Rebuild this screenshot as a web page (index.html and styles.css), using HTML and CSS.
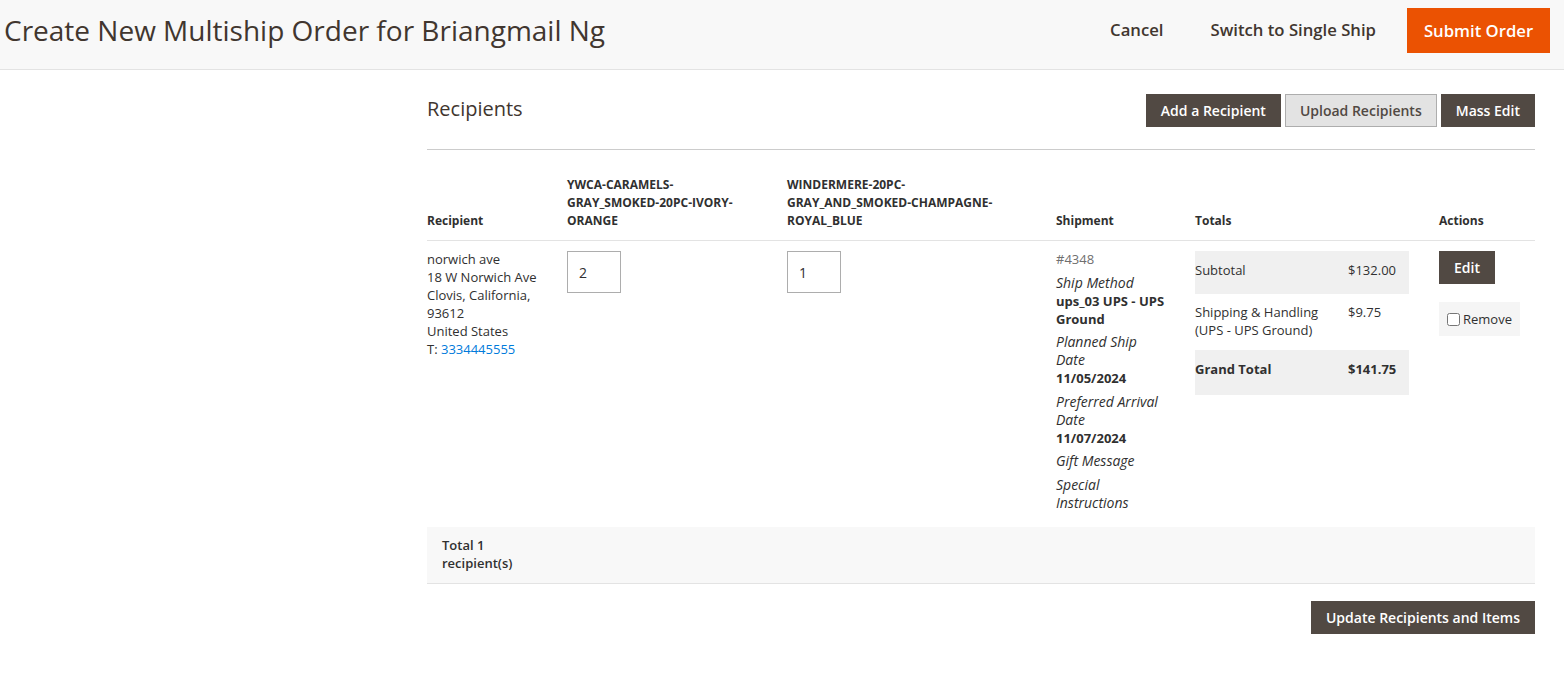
FILE: index.html
```
<!DOCTYPE html>
<html lang="en">
<head>
    <meta charset="UTF-8">
    <title>Create New Multiship Order</title>
    <link rel="stylesheet" href="styles.css">
</head>
<body>
<div class="page-header">
    <h1 class="page-title">Create New Multiship Order for Briangmail Ng</h1>
    <div class="page-actions">
        <button class="action-link">Cancel</button>
        <button class="action-link">Switch to Single Ship</button>
        <button class="action-primary">Submit Order</button>
    </div>
</div>

<div class="page-columns">
    <div class="side-col"></div>
    <div class="main-col">
        <div class="section-head">
            <h2 class="section-title">Recipients</h2>
            <div class="section-actions">
                <button class="btn">Add a Recipient</button>
                <button class="btn btn-light">Upload Recipients</button>
                <button class="btn">Mass Edit</button>
            </div>
        </div>

        <table class="grid">
            <colgroup>
                <col class="c-recipient">
                <col class="c-item1">
                <col class="c-item2">
                <col class="c-ship">
                <col class="c-totals">
                <col class="c-actions">
            </colgroup>
            <thead>
            <tr>
                <th>Recipient</th>
                <th class="th-item1">YWCA-CARAMELS-GRAY_SMOKED-20PC-IVORY-ORANGE</th>
                <th class="th-item2">WINDERMERE-20PC-GRAY_AND_SMOKED-CHAMPAGNE-ROYAL_BLUE</th>
                <th>Shipment</th>
                <th>Totals</th>
                <th>Actions</th>
            </tr>
            </thead>
            <tbody>
            <tr>
                <td>
                    <address class="addr">
                        norwich ave<br>
                        18 W Norwich Ave<br>
                        Clovis, California,<br>
                        93612<br>
                        United States<br>
                        T: <a href="#">3334445555</a>
                    </address>
                </td>
                <td><input class="qty" type="text" value="2"></td>
                <td><input class="qty" type="text" value="1"></td>
                <td>
                    <div class="ship">
                        <div class="ship-id">#4348</div>
                        <dl>
                            <dt>Ship Method</dt>
                            <dd>ups_03 UPS - UPS Ground</dd>
                            <dt>Planned Ship Date</dt>
                            <dd>11/05/2024</dd>
                            <dt>Preferred Arrival Date</dt>
                            <dd>11/07/2024</dd>
                            <dt>Gift Message</dt>
                            <dt>Special Instructions</dt>
                        </dl>
                    </div>
                </td>
                <td>
                    <table class="totals">
                        <tr class="odd">
                            <td>Subtotal</td>
                            <td>$132.00</td>
                        </tr>
                        <tr class="even">
                            <td>Shipping &amp; Handling (UPS - UPS Ground)</td>
                            <td>$9.75</td>
                        </tr>
                        <tr class="odd grand">
                            <td>Grand Total</td>
                            <td>$141.75</td>
                        </tr>
                    </table>
                </td>
                <td>
                    <button class="btn">Edit</button>
                    <label class="remove"><input type="checkbox">Remove</label>
                </td>
            </tr>
            </tbody>
            <tfoot>
            <tr>
                <td>Total 1 recipient(s)</td>
                <td colspan="5"></td>
            </tr>
            </tfoot>
        </table>

        <div class="grid-actions">
            <button class="btn">Update Recipients and Items</button>
        </div>
    </div>
</div>
</body>
</html>
```

FILE: styles.css
```
*{
    margin: 0;
    padding: 0;
    box-sizing: border-box;
}

body{
    font-family: "Open Sans", "Liberation Sans", sans-serif;
    font-size: 13px;
    line-height: 18px;
    color: #303030;
    background: #fff;
}

button{
    font-family: inherit;
    cursor: pointer;
}

/* header */
.page-header{
    display: flex;
    align-items: center;
    justify-content: space-between;
    height: 70px;
    margin-right: 3px;
    padding: 0 14px 0 4px;
    background: #f8f8f8;
    border-bottom: 1px solid #e3e3e3;
}
.page-title{
    font-size: 28px;
    font-weight: 400;
    line-height: 36px;
    color: #41362f;
    margin-top: -9px;
}
.page-actions{
    display: flex;
    align-items: center;
    gap: 15px;
    margin-top: -9px;
}
.action-link{
    background: none;
    border: 0;
    padding: 0 16px;
    font-size: 16.7px;
    font-weight: 600;
    color: #41362f;
    line-height: 22px;
}
.action-primary{
    height: 45px;
    width: 143px;
    padding: 0;
    background: #eb5202;
    border: 1px solid #eb5202;
    color: #fff;
    font-size: 16.7px;
    font-weight: 600;
}

/* columns */
.page-columns{
    display: flex;
}
.side-col{
    width: 427px;
    flex-shrink: 0;
}
.main-col{
    width: 1108px;
}

.section-head{
    display: flex;
    justify-content: space-between;
    align-items: flex-start;
    margin-top: 24px;
    padding-bottom: 22px;
    border-bottom: 1px solid #cccccc;
}
.section-title{
    font-size: 20px;
    font-weight: 400;
    line-height: 28px;
    color: #41362f;
    margin-top: 1px;
}
.section-actions{
    display: flex;
    gap: 4px;
}

.btn{
    height: 33px;
    padding: 0 14px;
    font-size: 14px;
    font-weight: 600;
    color: #fff;
    background: #514943;
    border: 1px solid #514943;
    white-space: nowrap;
}
.btn-light{
    color: #514943;
    background: #e3e3e3;
    border-color: #adadad;
}

/* grid */
.grid{
    width: 100%;
    margin-top: 16px;
    border-collapse: collapse;
    table-layout: fixed;
}
.c-recipient{ width: 140px; }
.c-item1{ width: 220px; }
.c-item2{ width: 269px; }
.c-ship{ width: 139px; }
.c-totals{ width: 244px; }
.c-actions{ width: 96px; }

.grid th{
    text-align: left;
    vertical-align: bottom;
    font-size: 12px;
    font-weight: 700;
    line-height: 18px;
    padding: 10px 20px 10px 0;
    border-bottom: 1px solid #e3e3e3;
}
.grid .th-item1{
    padding-right: 40px;
}
.grid .th-item2{
    padding-right: 40px;
}
.grid tbody > tr > td{
    vertical-align: top;
    padding: 10px 20px 15px 0;
}
.grid tbody > tr > td:last-child{
    padding-right: 0;
}

.addr{
    font-style: normal;
    margin-top: -1px;
}
.addr a{
    color: #007bdb;
    text-decoration: none;
}

.qty{
    display: block;
    width: 54px;
    height: 42px;
    padding: 0 11px;
    border: 1px solid #adadad;
    font-family: inherit;
    font-size: 14px;
    color: #303030;
}

.ship{
    width: 110px;
    margin-top: -1px;
}
.ship-id{
    color: #6f6f6f;
}
.ship dt{
    font-style: italic;
    font-size: 14px;
    margin-top: 5.5px;
}
.ship dd{
    font-weight: 700;
}

.totals{
    width: 214px;
    border-collapse: collapse;
}
.totals td{
    padding: 8px 0 16px;
    vertical-align: top;
}
.totals td:last-child{
    width: 61px;
}
.totals .odd{
    background: #f0f0f0;
}
.totals .even td{
    padding: 9px 0 11px;
}
.totals .grand td{
    font-weight: 700;
    padding-bottom: 17px;
}

.grid .btn{
    display: block;
}
.remove{
    display: flex;
    align-items: center;
    width: 81px;
    height: 34px;
    margin-top: 18px;
    padding-left: 8px;
    background: #f5f5f5;
    font-size: 13px;
}
.remove input{
    width: 13px;
    height: 13px;
    margin: 0 3px 0 0;
}

.grid tfoot td{
    background: #f8f8f8;
    padding: 9px 15px 11px 15px;
    font-weight: 600;
    border-bottom: 1px solid #e3e3e3;
}

.grid-actions{
    display: flex;
    justify-content: flex-end;
    margin-top: 17px;
}
```
